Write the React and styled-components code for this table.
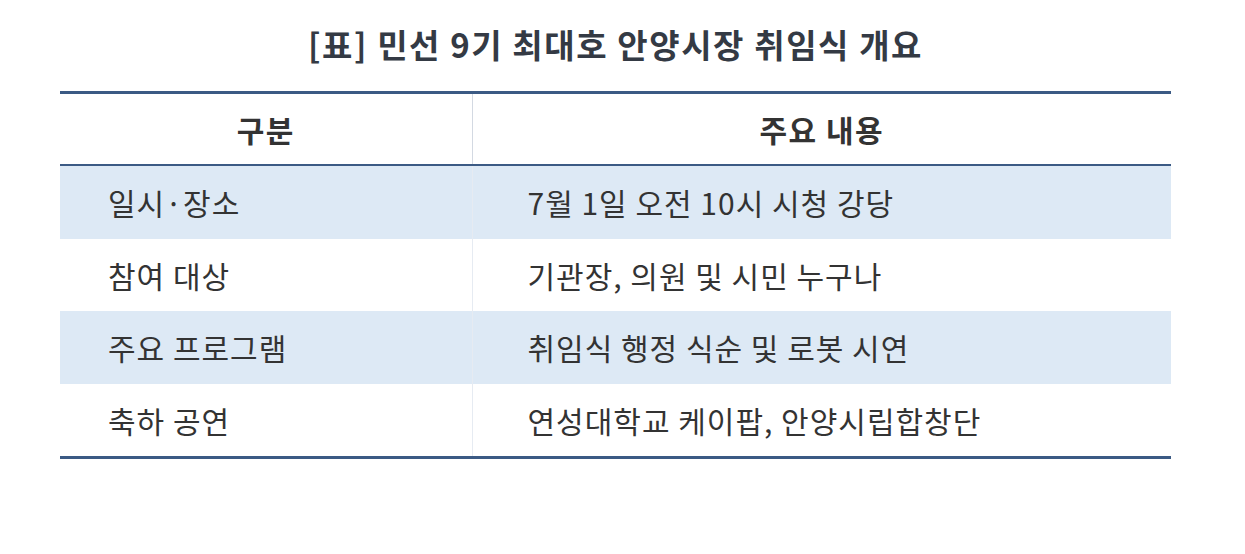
import styled, { createGlobalStyle } from "styled-components";

const GlobalStyle = createGlobalStyle`
  html, body {
    margin: 0;
    padding: 0;
    background: #ffffff;
  }
  body {
    font-family: "Noto Sans CJK KR", "Noto Sans", sans-serif;
    color: #333333;
  }
`;

const Page = styled.div`
  width: 1245px;
  height: 554px;
  padding: 22px 0 0 60px;
  box-sizing: border-box;
`;

const Wrap = styled.div`
  width: 1111px;
`;

const Title = styled.h2`
  margin: 0 0 25px;
  height: 44px;
  line-height: 44px;
  text-align: center;
  font-size: 33px;
  font-weight: 700;
  color: #343a44;
  letter-spacing: 1.6px;
`;

const Table = styled.table`
  width: 100%;
  border-collapse: collapse;
  table-layout: fixed;
  border-top: 3px solid #3b5a84;
  border-bottom: 3px solid #3b5a84;
`;

const HeadCell = styled.th`
  height: 70px;
  padding: 0;
  font-size: 30px;
  font-weight: 700;
  text-align: center;
  color: #333333;
  letter-spacing: 1.5px;
  border-bottom: 2px solid #3b5a84;
  border-left: ${(p) => (p.$first ? "none" : "1px solid #d3d9e2")};
`;

const Row = styled.tr`
  background: ${(p) => (p.$shade ? "#dde9f5" : "#ffffff")};
`;

const Cell = styled.td`
  height: 72.5px;
  padding: 0 0 0 ${(p) => (p.$first ? "48px" : "55px")};
  font-size: 30px;
  font-weight: 400;
  color: #333333;
  letter-spacing: 1px;
  text-align: left;
  vertical-align: middle;
  border-left: ${(p) => (p.$first ? "none" : "1px solid #e6ebf2")};
`;

const rows = [
  ["일시·장소", "7월 1일 오전 10시 시청 강당"],
  ["참여 대상", "기관장, 의원 및 시민 누구나"],
  ["주요 프로그램", "취임식 행정 식순 및 로봇 시연"],
  ["축하 공연", "연성대학교 케이팝, 안양시립합창단"],
];

export default function App() {
  return (
    <>
      <GlobalStyle />
      <Page>
        <Wrap>
          <Title>[표] 민선 9기 최대호 안양시장 취임식 개요</Title>
          <Table>
            <colgroup>
              <col style={{ width: "412px" }} />
              <col />
            </colgroup>
            <thead>
              <tr>
                <HeadCell $first>구분</HeadCell>
                <HeadCell>주요 내용</HeadCell>
              </tr>
            </thead>
            <tbody>
              {rows.map(([label, value], i) => (
                <Row key={label} $shade={i % 2 === 0}>
                  <Cell $first>{label}</Cell>
                  <Cell>{value}</Cell>
                </Row>
              ))}
            </tbody>
          </Table>
        </Wrap>
      </Page>
    </>
  );
}
